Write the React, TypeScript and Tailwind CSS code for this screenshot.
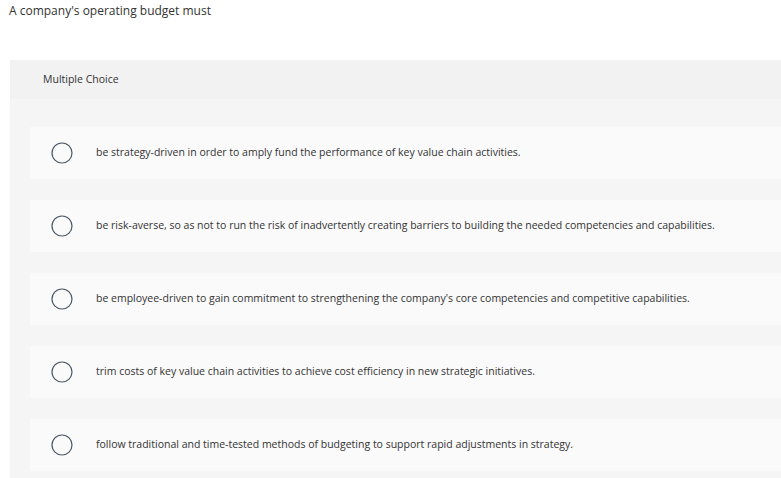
import React from "react";

const options = [
  "be strategy-driven in order to amply fund the performance of key value chain activities.",
  "be risk-averse, so as not to run the risk of inadvertently creating barriers to building the needed competencies and capabilities.",
  "be employee-driven to gain commitment to strengthening the company's core competencies and competitive capabilities.",
  "trim costs of key value chain activities to achieve cost efficiency in new strategic initiatives.",
  "follow traditional and time-tested methods of budgeting to support rapid adjustments in strategy.",
];

export default function App() {
  return (
    <div className="w-[781px] h-[478px] overflow-hidden bg-white text-[#333] font-['Open_Sans',sans-serif]">
      <div className="pl-[9px] pt-[3px] h-[60px] text-[12px] leading-[16px] text-[#333]">
        A company's operating budget must
      </div>
      <div className="ml-[10px]">
        <div className="h-[39px] bg-[#f2f2f2] flex items-center pl-[33px] text-[10.5px]">
          Multiple Choice
        </div>
        <div className="bg-[#f5f5f5] pt-[28px] pl-[20px] flex flex-col gap-[21px] h-[379px]">
          {options.map((o, i) => (
            <div key={i} className="h-[52px] bg-[#fafafa] flex items-center pl-[21px]">
              <svg width="22" height="22" viewBox="0 0 22 22" className="shrink-0">
                <circle cx="11" cy="11" r="10" fill="none" stroke="#4b5866" strokeWidth="1.2" />
              </svg>
              <span className="ml-[23px] text-[10.5px] text-[#333]">{o}</span>
            </div>
          ))}
        </div>
      </div>
    </div>
  );
}
